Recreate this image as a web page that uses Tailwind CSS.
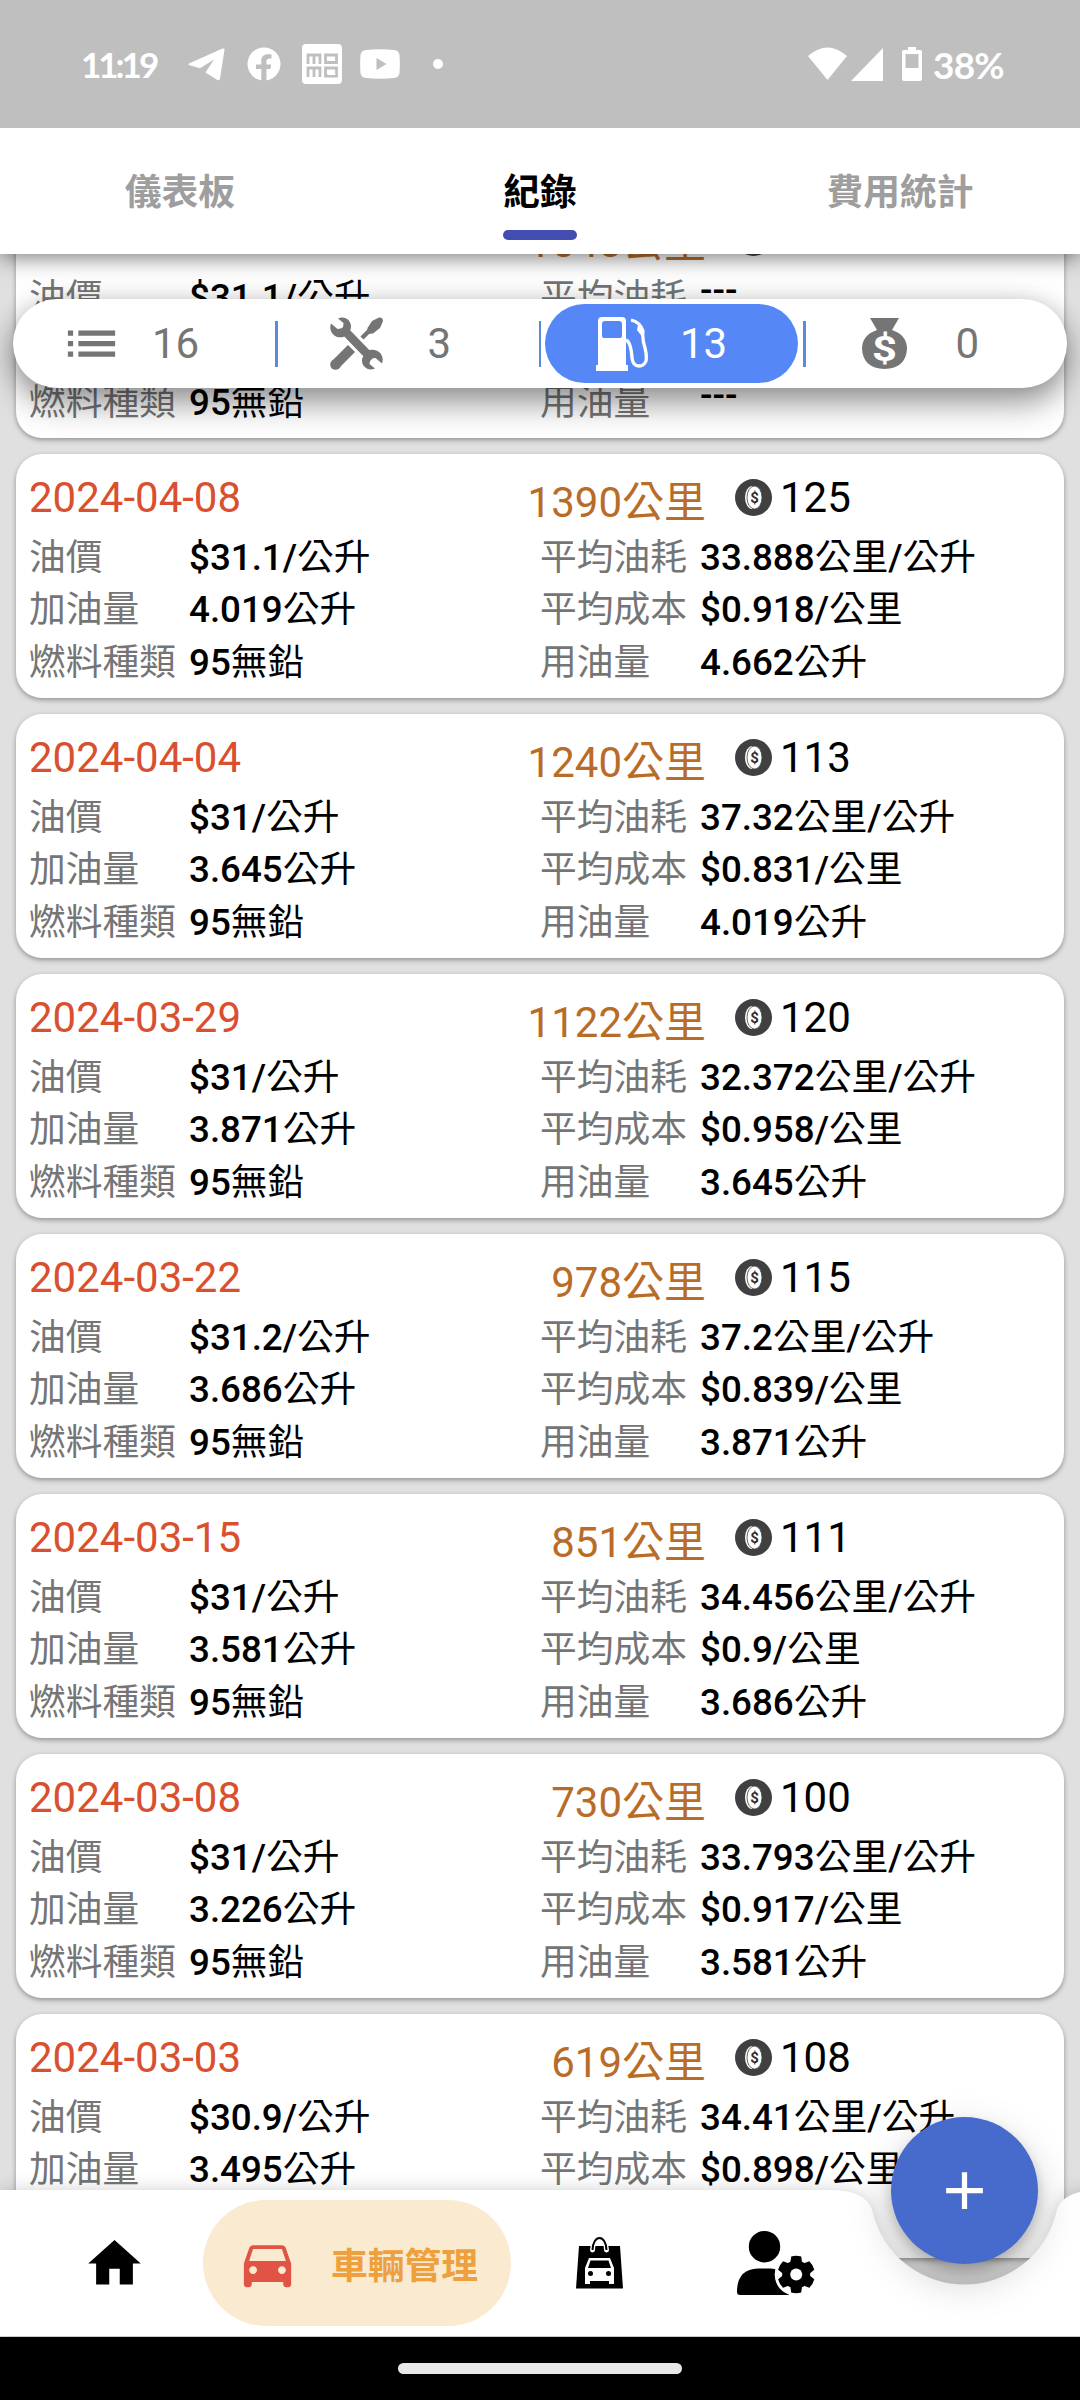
<!DOCTYPE html>
<html lang="zh-Hant">
<head>
<meta charset="utf-8">
<title>車輛管理</title>
<script src="https://cdn.jsdelivr.net/npm/@tailwindcss/browser@4"></script>
</head>
<body class="bg-black">
<div class="relative flex h-[2400px] w-[1080px] flex-col overflow-hidden bg-[#e0e0e0] font-['Roboto','Noto_Sans_CJK_TC',sans-serif]">

  <!-- Status bar -->
  <header class="relative z-30 flex h-32 shrink-0 items-center bg-[#bfbfbf] pl-[81px] pr-[75px] text-white">
    <span class="w-[107px] font-['Lato',sans-serif] text-[35px] font-bold leading-none tracking-[-3px]">11:19</span>
    <svg class="h-[33px] w-[37px]" viewBox="0 0 37 33" fill="currentColor"><path d="M1 15.500 34.500.6Q37-.3 36.400 2.500L32 30.600Q31.500 33.300 29 31.800L17.500 24.500 26 11.500 12 20.300 1.500 17.300Q-.5 16.500 1 15.500Z"/></svg>
    <svg class="ml-[22px] h-[34px] w-[34px]" viewBox="0 0 34 34"><circle cx="17" cy="17" r="16.500" fill="#fff"/><path d="M14.300 34V22H9v-4.500h5.300V14c0-5.500 3-7.500 10.200-6.600v4.200c-4-.4-5 .4-5 3v2.900h4.700L23.500 22h-4v12z" fill="#bfbfbf"/></svg>
    <svg class="ml-[21px] h-10 w-10" viewBox="0 0 40 40" fill="none"><rect width="40" height="40" rx="4" fill="#fff"/><g stroke="#bfbfbf" stroke-width="2.800"><path d="M6 20v-9h12v9M12 11v9M23.500 11h11v7.500h-11zM6 33v-9h12v9M12 24v9M23.500 24h11v8h-11z"/></g><path d="M26 29a3 3 0 0 1 6 0l2 2-8 0z" fill="#fff"/></svg>
    <svg class="ml-[18px] h-[30px] w-10" viewBox="0 0 40 30"><path d="M6 1Q20-.5 34 1 39 1.500 39.500 6q.7 9 0 18-.5 4.500-5.500 5-14 1.500-28 0Q1 28.500.5 24-.2 15 .5 6 1 1.500 6 1Z" fill="#fff"/><path d="M16.500 9v12l10-6z" fill="#bfbfbf"/></svg>
    <span class="ml-[33px] size-[10px] rounded-full bg-white"></span>
    <svg class="ml-auto h-[34px] w-[39px]" viewBox="0 0 39 34" fill="currentColor"><path d="M0 9Q19.500-8 39 9L19.500 33z"/></svg>
    <svg class="ml-1 h-[33px] w-8" viewBox="0 0 32 33" fill="currentColor"><path d="M32 0v33H0z"/></svg>
    <svg class="ml-[19px] h-[34px] w-[20px]" viewBox="0 0 20 34"><path d="M6 0h8v3h4q2 0 2 2v27q0 2-2 2H2q-2 0-2-2V5q0-2 2-2h4z" fill="#fff"/><path d="M3.500 7h13v14h-13z" fill="#bfbfbf"/></svg>
    <span class="ml-[11px] w-[72px] font-['Lato',sans-serif] text-[37px] font-bold leading-none tracking-[-0.800px]">38%</span>
  </header>

  <!-- Tabs -->
  <nav class="relative z-20 grid h-[126px] shrink-0 grid-cols-3 bg-white text-center text-[36.75px] font-bold leading-[129px] text-[#9e9e9e] shadow-[0_4px_20px_rgba(0,0,0,0.5)]">
    <span>儀表板</span>
    <span class="relative text-black">紀錄<i class="absolute bottom-[17px] left-1/2 h-[10px] w-[74px] -translate-x-1/2 rounded-full bg-[#444eb0]"></i></span>
    <span>費用統計</span>
  </nav>

  <!-- Records -->
  <main class="h-[2083px] shrink-0 overflow-hidden">
    <div id="records" class="-mt-[60px] flex flex-col gap-4 px-4"></div>
  </main>

  <!-- Category filter -->
  <div class="absolute left-[13px] top-[299px] z-10 flex h-[89px] w-[1054px] items-center rounded-full bg-white text-[42px] text-[#757575] shadow-[0_18px_32px_rgba(0,0,0,0.3),0_4px_26px_rgba(0,0,0,0.24)]">
    <div class="flex w-[262px] items-center pl-[47px]">
      <svg class="size-[63px]" viewBox="0 0 24 24" fill="currentColor"><path d="M3 13h2v-2H3v2zm0 4h2v-2H3v2zm0-8h2V7H3v2zm4 4h14v-2H7v2zm0 4h14v-2H7v2zM7 7v2h14V7H7z"/></svg>
      <span class="ml-[29px]">16</span>
    </div>
    <i class="h-[46px] w-[2.500px] bg-[#5b8ad6]"></i>
    <div class="flex w-[261px] items-center pl-[52px]">
      <svg class="size-[53px]" viewBox="0 0 53 53" fill="none"><path d="M5.500 47.500 21.500 31.500" stroke="currentColor" stroke-width="10"/><circle cx="5.500" cy="47.500" r="5.300" fill="currentColor"/><path d="M32 21 42 11" stroke="currentColor" stroke-width="4.500"/><path d="M49 .5Q53 0 53 4L50 11 43 16.500 37 17 37.500 11 42 4Z" fill="currentColor"/><path d="M12 11 42 42" stroke="currentColor" stroke-width="8.500"/><path d="M8 1.500C16-2 23 5 20.500 12.500L13.500 20C5 22-2 15 1 6.500L7.500 12 13 11 13.500 6ZM45 51.500C37 55 30 48 32.500 40.500L39.500 33C48 31 55 38 52 46.500L45.500 41 40.500 41.500 39.500 47Z" fill="currentColor"/></svg>
      <span class="ml-[45px]">3</span>
    </div>
    <i class="h-[46px] w-[2.500px] bg-[#5b8ad6]"></i>
    <div class="ml-[4px] flex h-[79px] w-[253px] items-center rounded-full bg-[#5588f6] pl-[51px] text-white">
      <svg class="h-[56px] w-[52px]" viewBox="0 0 52 56" fill="none"><path fill-rule="evenodd" d="M2 49V5q0-4 4-4h20q4 0 4 4v44h2v6H0v-6zM6 8v12q0 2 2 2h16q2 0 2-2V8q0-3-3-3H9Q6 5 6 8z" fill="currentColor"/><path d="M35 4q9 2 12 11-1 8 2 17 2 8 1 13-2 5-7 5-6 0-7-8-1-16-6-18" stroke="currentColor" stroke-width="3.300"/><path d="M42 9 48 15 47 22 41 14Z" fill="currentColor"/></svg>
      <span class="ml-[32px]">13</span>
    </div>
    <i class="ml-[5px] h-[46px] w-[2.500px] bg-[#5b8ad6]"></i>
    <div class="flex items-center pl-[56px]">
      <svg class="h-[51px] w-[45px]" viewBox="0 0 45 51"><path d="M8 0h29l-7 12Q45 17 45 31q-1 19-22.500 20Q1 50 0 31 0 17 15 12z" fill="currentColor"/><text x="22.500" y="43" text-anchor="middle" textLength="25" lengthAdjust="spacingAndGlyphs" class="fill-white text-[35px] font-bold">$</text></svg>
      <span class="ml-[49px]">0</span>
    </div>
  </div>

  <!-- Bottom bar, notched around the add button -->
  <div class="absolute bottom-16 left-0 z-10 h-[146px] w-full">
    <svg class="absolute inset-0 h-full w-full overflow-visible drop-shadow-[0_1px_9px_rgba(0,0,0,0.2)]" viewBox="0 0 1080 146"><path d="M0 0H829Q867.500 0 872.500 21.600A94.500 94.500 0 0 0 1056.500 21.600Q1061.500 0 1100 0V146H0Z" fill="#fff"/></svg>
    <div class="relative flex h-full items-center">
      <svg class="ml-[83px] size-[63px]" viewBox="0 0 24 24"><path d="M10 20v-6h4v6h5v-8h3L12 3 2 12h3v8z"/></svg>
      <div class="ml-[57px] flex h-[126px] w-[308px] items-center rounded-full bg-[#faebd0] pl-[33px]">
        <svg class="size-[63px]" viewBox="0 0 24 24" fill="#e05345"><path d="M18.920 6.010C18.720 5.420 18.160 5 17.500 5h-11c-.66 0-1.210.42-1.420 1.010L3 12v8c0 .55.45 1 1 1h1c.55 0 1-.45 1-1v-1h12v1c0 .55.45 1 1 1h1c.55 0 1-.45 1-1v-8l-2.080-5.990zM6.500 16c-.83 0-1.500-.67-1.500-1.500S5.670 13 6.500 13s1.500.67 1.500 1.500S7.330 16 6.500 16zm11 0c-.83 0-1.500-.67-1.500-1.500s.67-1.500 1.500-1.500 1.500.67 1.500 1.500-.67 1.500-1.500 1.500zM5 11l1.500-4.500h11L19 11H5z"/></svg>
        <span class="ml-[32px] pt-[7px] text-[36.75px] font-bold text-[#eda03c]">車輛管理</span>
      </div>
      <svg class="ml-[65px] h-[52px] w-[47px]" viewBox="0 0 47 52" fill="none"><path d="M3 9h41l3 42.500H0z" fill="#000"/><path d="M16.500 13C17-3 30-3 30.500 13" stroke="#fff" stroke-width="5" stroke-linecap="round"/><path d="M16.500 13C17-3 30-3 30.500 13" stroke="#000" stroke-width="2"/><path fill-rule="evenodd" d="M13 21h21l4 10v16h-5v-3H14v3H9V31zm1.500 2.500L12 31h23l-2.500-7.500z" fill="#fff"/><circle cx="14.500" cy="36.500" r="2.500" fill="#000"/><circle cx="32.500" cy="36.500" r="2.500" fill="#000"/></svg>
      <svg class="ml-[114px] h-[64px] w-[78px]" viewBox="0 0 78 64"><circle cx="27.500" cy="15.700" r="15.700"/><path d="M21 37.500H34Q50 38 52 64H3Q0 64 0 61 0 38 21 37.500Z"/><circle cx="59.200" cy="43.500" r="21.500" fill="#fff"/><g transform="translate(59.200 43.500)"><circle r="14"/><g id="tooth"><path d="M-6-11-5-18Q0-19.500 5-18L6-11ZM-6 11-5 18Q0 19.500 5 18L6 11Z"/></g><use href="#tooth" transform="rotate(60)"/><use href="#tooth" transform="rotate(120)"/><circle r="6" fill="#fff"/></g></svg>
    </div>
  </div>
  <button class="absolute left-[891px] top-[2117px] z-20 flex size-[147px] items-center justify-center rounded-full bg-[#466bcd] shadow-[0_16px_44px_rgba(0,0,0,0.2),0_8px_14px_rgba(0,0,0,0.2)]">
    <svg class="size-[63px]" viewBox="0 0 24 24" fill="#fff"><path d="M19 13h-6v6h-2v-6H5v-2h6V5h2v6h6v2z"/></svg>
  </button>

  <!-- Gesture bar -->
  <footer class="relative z-30 flex h-16 shrink-0 items-center justify-center bg-black pb-px">
    <span class="h-[11px] w-[284px] rounded-full bg-[#e8e8e8]"></span>
  </footer>
</div>

<script>
  // date, odometer, cost, price, litres, economy, cost per km, fuel used
  const records = [
    ['2024-04-13', '1548', '145', '31.1', '4.662', '---', '---', '---'],
    ['2024-04-08', '1390', '125', '31.1', '4.019', '33.888公里/公升', '$0.918/公里', '4.662公升'],
    ['2024-04-04', '1240', '113', '31', '3.645', '37.32公里/公升', '$0.831/公里', '4.019公升'],
    ['2024-03-29', '1122', '120', '31', '3.871', '32.372公里/公升', '$0.958/公里', '3.645公升'],
    ['2024-03-22', '978', '115', '31.2', '3.686', '37.2公里/公升', '$0.839/公里', '3.871公升'],
    ['2024-03-15', '851', '111', '31', '3.581', '34.456公里/公升', '$0.9/公里', '3.686公升'],
    ['2024-03-08', '730', '100', '31', '3.226', '33.793公里/公升', '$0.917/公里', '3.581公升'],
    ['2024-03-03', '619', '108', '30.9', '3.495', '34.41公里/公升', '$0.898/公里', '3.495公升'],
  ];
  // Latin characters are medium weight, Chinese ones regular
  const mixed = s => s.replace(/[\x20-\x7e]+/g, m => `<span class="font-medium">${m}</span>`);
  const row = (l1, v1, l2, v2) => `
    <span class="text-[#757575]">${l1}</span><span>${mixed(v1)}</span>
    <span class="text-[#757575]">${l2}</span><span class="${v2 === '---' ? '-mt-[7px]' : ''}">${mixed(v2)}</span>`;
  document.getElementById('records').innerHTML = records.map(([d, km, cost, price, l, eco, cpk, used]) => `
    <section class="h-[244px] shrink-0 rounded-[26px] bg-white pl-[13px] shadow-[0_2px_5px_rgba(0,0,0,0.35)]">
      <div class="flex h-[78px] items-center pt-[10px] text-[42px] leading-[50px]">
        <span class="w-[300px] text-[#d9502f]">${d}</span>
        <span class="w-[377px] pt-[10px] text-right text-[#b86c28]">${km}公里</span>
        <svg class="-mt-[2px] ml-[29px] mr-[8px] size-[37px]" viewBox="0 0 37 37"><circle cx="18.500" cy="18.500" r="18.500" fill="#404040"/><ellipse cx="17.500" cy="18.500" rx="7.500" ry="11.500" fill="#fff"/><ellipse cx="19.500" cy="18.500" rx="7.500" ry="11.500" fill="#fff" stroke="#404040" stroke-width=".8"/><text x="19.500" y="24" text-anchor="middle" class="fill-[#303030] text-[15px] font-bold">$</text></svg>
        <span class="text-black">${cost}</span>
      </div>
      <div class="grid grid-cols-[160px_351px_160px_1fr] whitespace-nowrap text-[36.75px] leading-[52.4px] text-black">
        ${row('油價', '$' + price + '/公升', '平均油耗', eco)}
        ${row('加油量', l + '公升', '平均成本', cpk)}
        ${row('燃料種類', '95無鉛', '用油量', used)}
      </div>
    </section>`).join('');
</script>
</body>
</html>
